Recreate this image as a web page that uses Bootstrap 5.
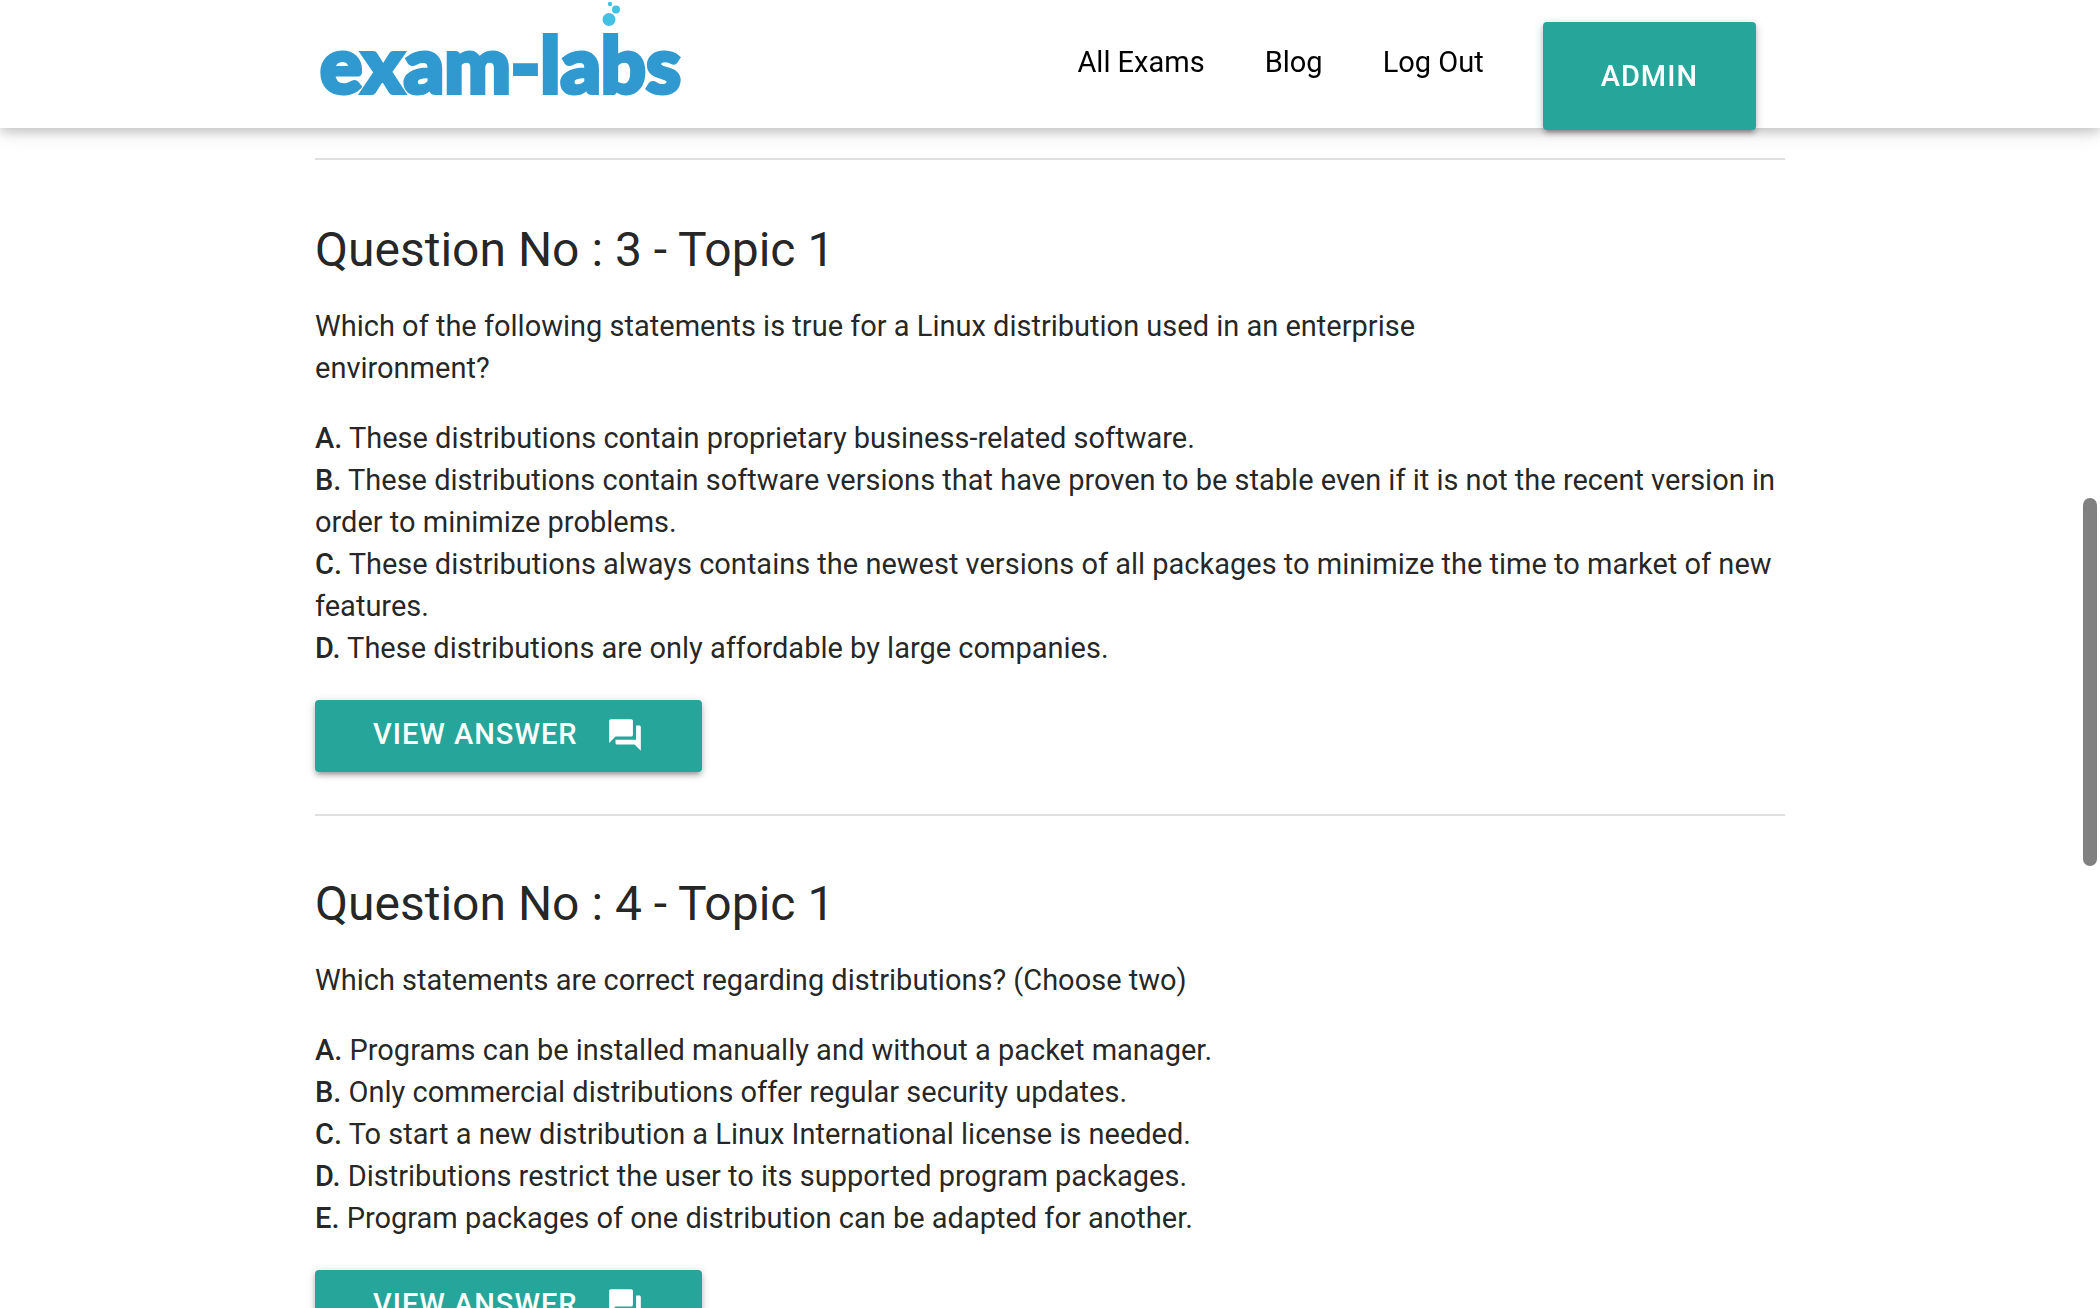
<!DOCTYPE html>
<html lang="en">
<head>
<meta charset="utf-8">
<meta name="viewport" content="width=device-width, initial-scale=1">
<title>Exam-Labs</title>
<link href="https://cdn.jsdelivr.net/npm/bootstrap@5.3.0/dist/css/bootstrap.min.css" rel="stylesheet">
<style>
:root { --teal: #26a69a; --lift: 0 4px 4px 0 rgba(0,0,0,.14), 0 6px 2px -4px rgba(0,0,0,.12), 0 2px 10px 0 rgba(0,0,0,.2); --lift-bar: 0 4px 10px 0 rgba(0,0,0,.16), 0 4px 20px 0 rgba(0,0,0,.12); }
body { font-family: Roboto, "Liberation Sans", sans-serif; font-size: 29px; line-height: 42px; color: rgba(0,0,0,.87); background: #fff; height: 100vh; overflow: hidden; }
.page-col { width: 70%; margin-left: 15%; }
.topbar { height: 128px; background: #fff; box-shadow: var(--lift-bar); }
.brand svg { display: block; width: 370px; height: 120px; overflow: visible; }
.brand text { font-family: Lato, sans-serif; font-weight: 900; font-size: 79px; fill: #2f99d0; stroke: #2f99d0; stroke-width: 4px; }
.topbar .nav-link { color: #000; padding: 0 30px; line-height: 124px; }
.btn-teal { --bs-btn-color: #fff; --bs-btn-bg: var(--teal); --bs-btn-border-color: var(--teal); --bs-btn-hover-color: #fff; --bs-btn-hover-bg: #2bbbad; --bs-btn-hover-border-color: #2bbbad; --bs-btn-border-width: 0px; --bs-btn-border-radius: 4px; --bs-btn-font-size: 29px; --bs-btn-padding-x: 58px; --bs-btn-padding-y: 0px; letter-spacing: 1px; font-weight: 500; text-transform: uppercase; box-shadow: var(--lift); }
.btn-admin { height: 108px; line-height: 108px; margin: 22px 29px 0; }
.btn-answer { height: 72px; padding-bottom: 3px; margin-top: 31px; }
.btn-answer svg { width: 38px; height: 38px; margin-left: 28px; }
.rule { border: 0; border-top: 2px solid #e0e0e0; opacity: 1; margin: 0; }
.exam-body { padding-top: 158px; }
.question { padding: 63px 0 42px; }
.question:last-child { padding-top: 61px; }
.question h2 { font-size: 48px; line-height: 53px; font-weight: 400; margin-bottom: 29px; }
.question p { margin: 0 0 28px; }
.question b { font-weight: 500; }
.scroll-thumb { right: 3px; top: 498px; width: 14px; height: 368px; background: #808080; z-index: 1040; }
</style>
</head>
<body>
<header class="topbar fixed-top">
  <nav class="page-col d-flex justify-content-between align-items-start" aria-label="Main">
    <a class="brand" href="#" aria-label="exam-labs">
      <svg viewBox="0 0 370 120">
        <text x="5" y="93">exam-labs</text>
        <g fill="#42c1e4"><circle cx="294" cy="19.5" r="6.5"/><circle cx="301" cy="9.5" r="4"/><circle cx="295" cy="4" r="2.2"/></g>
      </svg>
    </a>
    <div class="d-flex align-items-start">
      <a class="nav-link" href="#">All Exams</a>
      <a class="nav-link" href="#">Blog</a>
      <a class="nav-link" href="#">Log Out</a>
      <button type="button" class="btn btn-teal btn-admin">Admin</button>
    </div>
  </nav>
</header>

<main class="page-col exam-body">
  <hr class="rule">
  <section class="question">
    <h2>Question No : 3 - Topic 1</h2>
    <p>Which of the following statements is true for a Linux distribution used in an enterprise<br>environment?</p>
    <div><b>A.</b> These distributions contain proprietary business-related software.</div>
    <div><b>B.</b> These distributions contain software versions that have proven to be stable even if it is not the recent version in order to minimize problems.</div>
    <div><b>C.</b> These distributions always contains the newest versions of all packages to minimize the time to market of new features.</div>
    <div><b>D.</b> These distributions are only affordable by large companies.</div>
    <button type="button" class="btn btn-teal btn-answer d-flex align-items-center">View Answer
      <svg viewBox="0 0 24 24" fill="currentColor" aria-hidden="true"><path d="M21 6h-2v9H6v2c0 .55.45 1 1 1h11l4 4V7c0-.55-.45-1-1-1zm-4 6V3c0-.55-.45-1-1-1H3c-.55 0-1 .45-1 1v14l4-4h10c.55 0 1-.45 1-1z"/></svg>
    </button>
  </section>
  <hr class="rule">
  <section class="question">
    <h2>Question No : 4 - Topic 1</h2>
    <p>Which statements are correct regarding distributions? (Choose two)</p>
    <div><b>A.</b> Programs can be installed manually and without a packet manager.</div>
    <div><b>B.</b> Only commercial distributions offer regular security updates.</div>
    <div><b>C.</b> To start a new distribution a Linux International license is needed.</div>
    <div><b>D.</b> Distributions restrict the user to its supported program packages.</div>
    <div><b>E.</b> Program packages of one distribution can be adapted for another.</div>
    <button type="button" class="btn btn-teal btn-answer d-flex align-items-center">View Answer
      <svg viewBox="0 0 24 24" fill="currentColor" aria-hidden="true"><path d="M21 6h-2v9H6v2c0 .55.45 1 1 1h11l4 4V7c0-.55-.45-1-1-1zm-4 6V3c0-.55-.45-1-1-1H3c-.55 0-1 .45-1 1v14l4-4h10c.55 0 1-.45 1-1z"/></svg>
    </button>
  </section>
</main>
<div class="scroll-thumb position-fixed rounded-pill" aria-hidden="true"></div>
<script src="https://cdn.jsdelivr.net/npm/bootstrap@5.3.0/dist/js/bootstrap.bundle.min.js"></script>
</body>
</html>
